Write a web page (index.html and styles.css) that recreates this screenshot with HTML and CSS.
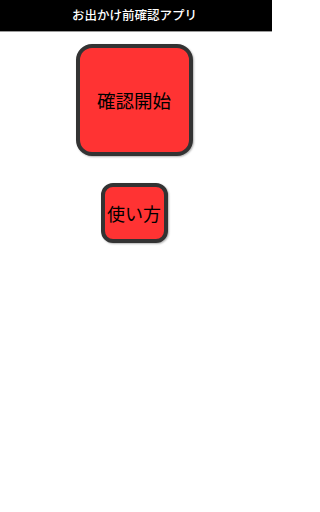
FILE: index.html
```html
<!DOCTYPE html>
<html lang="ja">
<head>
<meta charset="utf-8">
<link rel="stylesheet" href="styles.css">
</head>
<body>
<header class="bar"><span class="bar-title">お出かけ前確認アプリ</span></header>
<main class="content">
  <button class="btn btn-start">確認開始</button>
  <button class="btn btn-help">使い方</button>
</main>
</body>
</html>
```
FILE: styles.css
```css
* { box-sizing: border-box; }
html, body { margin: 0; padding: 0; background: #fff; }
body {
  font-family: "Noto Sans CJK JP", "Noto Sans", sans-serif;
  width: 272px;
  height: 512px;
}
.bar {
  height: 32px;
  background: #000;
  border-bottom: 1px solid #9a9a9a;
  display: flex;
  align-items: center;
  justify-content: center;
  padding-right: 3px;
}
.bar-title {
  color: #fff;
  font-size: 12.5px;
  font-weight: 500;
  line-height: 1;
}
.content {
  display: flex;
  flex-direction: column;
  align-items: center;
  padding-top: 12px;
  padding-right: 4px;
  gap: 27px;
}
.btn {
  background: #ff3333;
  border: 4px solid #333;
  color: #000;
  font-family: "Noto Sans CJK JP", sans-serif;
  font-size: 18.5px;
  padding: 0;
  display: flex;
  align-items: center;
  justify-content: center;
  box-shadow: 1px 1px 2px rgba(0,0,0,0.3);
}
.btn-start {
  width: 117px;
  height: 112px;
  border-radius: 16px;
}
.btn-help {
  width: 67px;
  height: 60px;
  border-radius: 12px;
  font-size: 18px;
}
```
